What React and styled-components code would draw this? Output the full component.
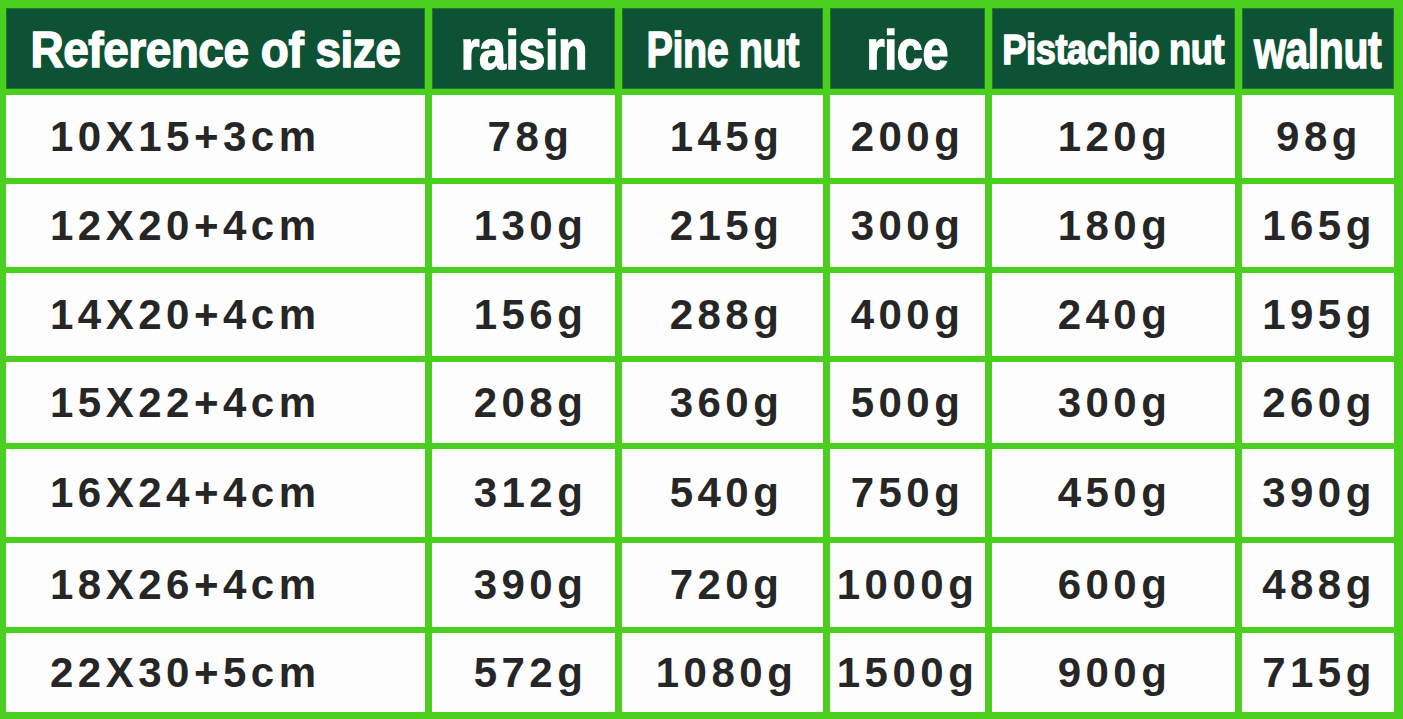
import React from "react";
import styled, { createGlobalStyle } from "styled-components";

const GlobalStyle = createGlobalStyle`
  html, body {
    margin: 0;
    padding: 0;
    background: #ffffff;
  }
  body {
    font-family: "Liberation Sans", Arial, sans-serif;
  }
`;

const Table = styled.div`
  width: 1403px;
  height: 719px;
  box-sizing: border-box;
  padding: 8px 9px 7px 6px;
  background: #4bcf1f;
  display: grid;
  grid-template-columns: 419px 183px 201px 155px 243px 152px;
  grid-template-rows: 81px 83px 83px 83px 81px 88px 84px 79px;
  column-gap: 7px;
  row-gap: 6px;
  overflow: hidden;
`;

const HeadCell = styled.div`
  background: #0d5234;
  display: flex;
  align-items: center;
  justify-content: center;
  overflow: visible;
  box-shadow: inset 0 0 0 1px #1f7a22;
`;

const HeadLabel = styled.span`
  display: inline-block;
  white-space: nowrap;
  color: #ffffff;
  font-family: "Liberation Sans", Arial, sans-serif;
  font-weight: 700;
  font-size: ${(p) => p.$size}px;
  line-height: 1;
  letter-spacing: -0.5px;
  -webkit-text-stroke: 1.3px #ffffff;
  transform: scale(${(p) => p.$scale}, 1.08);
  margin-top: 2px;
`;

const Cell = styled.div`
  background: #fdfdfd;
  display: flex;
  align-items: center;
  justify-content: ${(p) => (p.$first ? "flex-start" : "center")};
  padding-left: ${(p) => p.$pad || 0}px;
  box-sizing: border-box;
  color: #262626;
  font-family: "Liberation Sans", Arial, sans-serif;
  font-weight: 700;
  font-size: 42px;
  letter-spacing: 4.5px;
  white-space: nowrap;
`;

const columns = [
  { title: "Reference of size", size: 46, scale: 1.0, pad: 44, first: true },
  { title: "raisin", size: 52, scale: 0.93, pad: 14 },
  { title: "Pine nut", size: 46, scale: 0.86, pad: 8 },
  { title: "rice", size: 52, scale: 0.9, pad: 0 },
  { title: "Pistachio nut", size: 39, scale: 0.93, pad: 2 },
  { title: "walnut", size: 50, scale: 0.82, pad: 2 },
];

const rows = [
  ["10X15+3cm", "78g", "145g", "200g", "120g", "98g"],
  ["12X20+4cm", "130g", "215g", "300g", "180g", "165g"],
  ["14X20+4cm", "156g", "288g", "400g", "240g", "195g"],
  ["15X22+4cm", "208g", "360g", "500g", "300g", "260g"],
  ["16X24+4cm", "312g", "540g", "750g", "450g", "390g"],
  ["18X26+4cm", "390g", "720g", "1000g", "600g", "488g"],
  ["22X30+5cm", "572g", "1080g", "1500g", "900g", "715g"],
];

export default function App() {
  return (
    <>
      <GlobalStyle />
      <Table>
        {columns.map((col) => (
          <HeadCell key={col.title}>
            <HeadLabel $size={col.size} $scale={col.scale}>
              {col.title}
            </HeadLabel>
          </HeadCell>
        ))}
        {rows.map((row, r) =>
          row.map((value, c) => (
            <Cell
              key={r + "-" + c}
              $first={columns[c].first}
              $pad={columns[c].pad}
            >
              {value}
            </Cell>
          ))
        )}
      </Table>
    </>
  );
}
